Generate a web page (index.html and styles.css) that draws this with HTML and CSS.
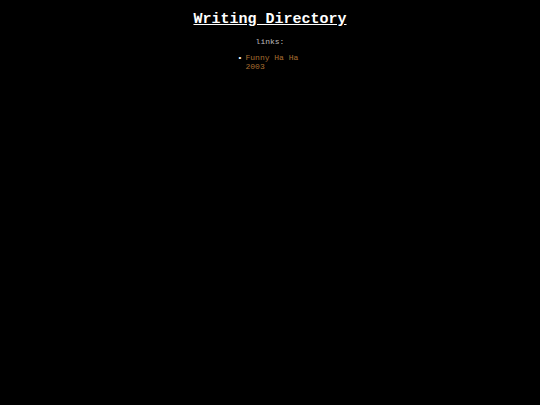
FILE: index.html
```html
<!DOCTYPE html>
<html>
<head>
<meta charset="utf-8">
<link rel="stylesheet" href="styles.css">
</head>
<body>
<div class="page">
  <h1 class="title">Writing Directory</h1>
  <p class="label">links:</p>
  <ul class="links">
    <li><a href="#">Funny Ha Ha 2003</a></li>
  </ul>
</div>
</body>
</html>
```
FILE: styles.css
```css
html, body {
  margin: 0;
  background: #000;
  height: 100%;
}
.page {
  display: flex;
  flex-direction: column;
  align-items: center;
  font-family: "Liberation Mono", monospace;
  color: #c8c8c8;
}
.title {
  margin: 11px 0 0;
  font-size: 15px;
  line-height: 18px;
  font-weight: bold;
  color: #fff;
  text-decoration: underline;
}
.label {
  margin: 8px 0 0;
  font-size: 8px;
  line-height: 9px;
  color: #bdbdbd;
}
.links {
  list-style: none;
  margin: 8px 0 0;
  width: 57px;
  padding: 0 0 0 8px;
  font-size: 8px;
  line-height: 8.5px;
  color: #fff;
}
.links li {
  text-indent: -8px;
}
.links li::before {
  content: "\2022";
  display: inline-block;
  width: 8px;
  text-indent: 0;
}
.links a {
  color: #a86e30;
  text-decoration: none;
}
```
